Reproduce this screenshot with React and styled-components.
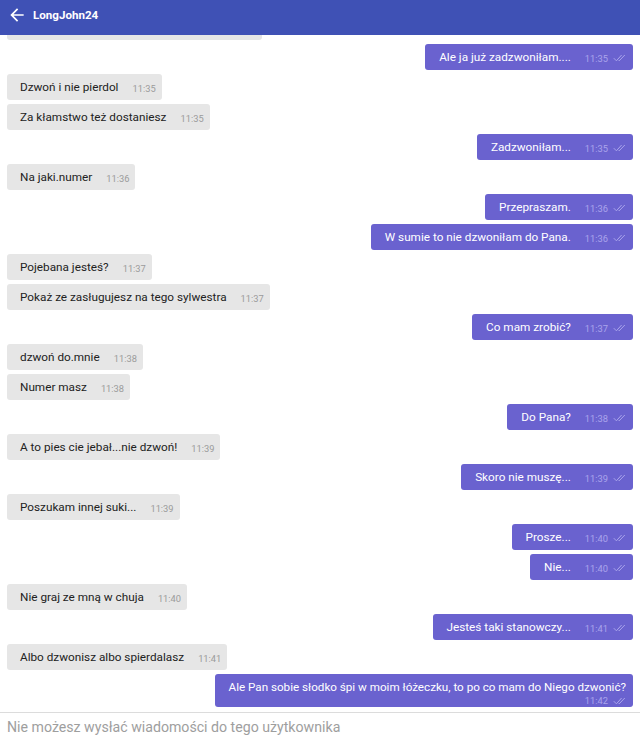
import React from "react";
import styled, { createGlobalStyle } from "styled-components";

const GlobalStyle = createGlobalStyle`
  html, body {
    margin: 0;
    padding: 0;
    background: #fff;
  }
  body {
    font-family: Roboto, "Noto Sans", "Liberation Sans", sans-serif;
  }
`;

const messages = [
  { me: true, text: "Ale ja już zadzwoniłam....", time: "11:35" },
  { me: false, text: "Dzwoń i nie pierdol", time: "11:35" },
  { me: false, text: "Za kłamstwo też dostaniesz", time: "11:35" },
  { me: true, text: "Zadzwoniłam...", time: "11:35" },
  { me: false, text: "Na jaki.numer", time: "11:36" },
  { me: true, text: "Przepraszam.", time: "11:36" },
  { me: true, text: "W sumie to nie dzwoniłam do Pana.", time: "11:36" },
  { me: false, text: "Pojebana jesteś?", time: "11:37" },
  { me: false, text: "Pokaż ze zasługujesz na tego sylwestra", time: "11:37" },
  { me: true, text: "Co mam zrobić?", time: "11:37" },
  { me: false, text: "dzwoń do.mnie", time: "11:38" },
  { me: false, text: "Numer masz", time: "11:38" },
  { me: true, text: "Do Pana?", time: "11:38" },
  { me: false, text: "A to pies cie jebał...nie dzwoń!", time: "11:39" },
  { me: true, text: "Skoro nie muszę...", time: "11:39" },
  { me: false, text: "Poszukam innej suki...", time: "11:39" },
  { me: true, text: "Prosze...", time: "11:40" },
  { me: true, text: "Nie...", time: "11:40" },
  { me: false, text: "Nie graj ze mną w chuja", time: "11:40" },
  { me: true, text: "Jesteś taki stanowczy...", time: "11:41" },
  { me: false, text: "Albo dzwonisz albo spierdalasz", time: "11:41" },
  {
    me: true,
    text: "Ale Pan sobie słodko śpi w moim łóżeczku, to po co mam do Niego dzwonić?",
    time: "11:42",
    long: true,
  },
];

function DoubleCheck() {
  return (
    <svg width="13" height="8" viewBox="0 0 13 8" fill="none">
      <path d="M0.8 4.2 L3.4 6.8 L8.6 1" stroke="currentColor" strokeWidth="1" />
      <path d="M5.6 6.2 L6.2 6.8 L11.8 1" stroke="currentColor" strokeWidth="1" />
    </svg>
  );
}

export default function App() {
  return (
    <Page>
      <GlobalStyle />
      <Header>
        <BackButton>
          <svg width="20" height="20" viewBox="0 0 24 24" fill="#fff">
            <path d="M20 11H7.83l5.59-5.59L12 4l-8 8 8 8 1.41-1.41L7.83 13H20v-2z" />
          </svg>
        </BackButton>
        <Title>LongJohn24</Title>
      </Header>
      <Messages>
        <List>
          {/* bubble scrolled up under the header, only its bottom edge shows */}
          <Row>
            <ScrolledBubble $width={255} />
          </Row>
          {messages.map((m, i) => (
            <Row key={i} $me={m.me}>
              <Bubble $me={m.me} $long={m.long}>
                <Text $long={m.long}>{m.text}</Text>
                <Meta $me={m.me} $long={m.long}>
                  <Time>{m.time}</Time>
                  {m.me && <DoubleCheck />}
                </Meta>
              </Bubble>
            </Row>
          ))}
        </List>
      </Messages>
      <Footer>Nie możesz wysłać wiadomości do tego użytkownika</Footer>
    </Page>
  );
}

const Page = styled.div`
  width: 640px;
  height: 740px;
  display: flex;
  flex-direction: column;
  overflow: hidden;
`;

const Header = styled.div`
  height: 35px;
  flex: 0 0 35px;
  background: #3f51b5;
  display: flex;
  align-items: center;
  padding-bottom: 5px;
  box-sizing: border-box;
  position: relative;
  z-index: 2;
`;

const BackButton = styled.div`
  display: flex;
  align-items: center;
  margin-left: 7px;
  width: 26px;
`;

const Title = styled.div`
  color: #fff;
  font-size: 11.6px;
  font-weight: 700;
`;

const Messages = styled.div`
  flex: 1;
  overflow: hidden;
  display: flex;
  flex-direction: column;
  justify-content: flex-end;
  padding-bottom: 5px;
`;

const List = styled.div`
  display: flex;
  flex-direction: column;
  gap: 4px;
  padding: 0 7px;
`;

const Row = styled.div`
  display: flex;
  justify-content: ${(p) => (p.$me ? "flex-end" : "flex-start")};
`;

const ScrolledBubble = styled.div`
  width: ${(p) => p.$width}px;
  height: 26px;
  border-radius: 3px;
  background: #e6e6e6;
`;

const Bubble = styled.div`
  display: flex;
  flex-direction: ${(p) => (p.$long ? "column" : "row")};
  align-items: ${(p) => (p.$long ? "stretch" : "center")};
  min-height: 26px;
  box-sizing: border-box;
  padding: ${(p) =>
    p.$long ? "5px 7px 1px 14px" : p.$me ? "0 7px 0 14px" : "0 6px 0 13px"};
  border-radius: 3px;
  background: ${(p) => (p.$me ? "#6a62cf" : "#e6e6e6")};
  color: ${(p) => (p.$me ? "#ffffff" : "#222222")};
  font-size: 11.75px;
  line-height: 16px;
`;

const Text = styled.span`
  white-space: nowrap;
  font-size: ${(p) => (p.$long ? "11.65px" : "inherit")};
`;

const Meta = styled.span`
  display: flex;
  align-items: center;
  gap: 5px;
  justify-content: flex-end;
  margin-left: ${(p) => (p.$long ? "0" : "14px")};
  margin-top: ${(p) => (p.$long ? "0" : "2px")};
  color: ${(p) => (p.$me ? "#aaa5ec" : "#9b9b9b")};
  font-size: 9.3px;
  line-height: 11px;
`;

const Time = styled.span``;

const Footer = styled.div`
  flex: 0 0 28px;
  border-top: 1px solid #dcdcdc;
  box-sizing: border-box;
  display: flex;
  align-items: center;
  padding-left: 7px;
  color: #9e9e9e;
  font-size: 14.15px;
`;
